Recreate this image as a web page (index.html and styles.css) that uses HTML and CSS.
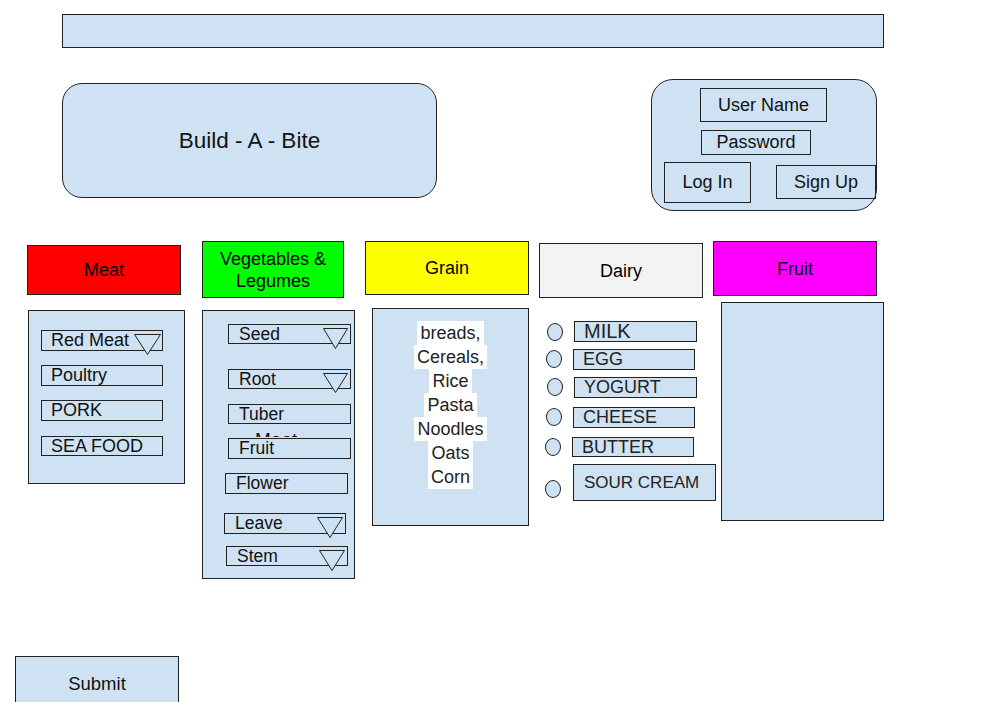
FILE: index.html
```html
<!doctype html>
<html lang="en">
    <head>
        <meta charset="UTF-8" />
        <title>Build - A - Bite</title>
        <link rel="stylesheet" href="styles.css">
    </head>

    <body>
        <div class="topbar"></div>

        <div class="hero">
            <div class="title-box">Build - A - Bite</div>
            <div class="login-box">
                <div class="field field-user">User Name</div>
                <div class="field field-pass">Password</div>
                <div class="login-actions">
                    <div class="btn btn-login">Log In</div>
                    <div class="btn btn-signup">Sign Up</div>
                </div>
            </div>
        </div>

        <div class="groups">
            <!-- meat -->
            <div class="col col-meat">
                <div class="cat cat-meat">Meat</div>
                <div class="panel panel-meat">
                    <div class="item item-redmeat">Red Meat
                        <svg class="tri" width="27" height="21" viewBox="0 0 27 21"><polygon points="0.5,0.5 26.5,0.5 13.5,20.5" /></svg>
                    </div>
                    <div class="item item-poultry">Poultry</div>
                    <div class="item item-pork">PORK</div>
                    <div class="item item-seafood">SEA FOOD</div>
                </div>
            </div>

            <!-- vegetables -->
            <div class="col col-veg">
                <div class="cat cat-veg">Vegetables &amp;<br>Legumes</div>
                <div class="panel panel-veg">
                    <div class="item v-seed">Seed
                        <svg class="tri" width="25" height="21" viewBox="0 0 25 21"><polygon points="0.5,0.5 24.5,0.5 12.5,20.5" /></svg>
                    </div>
                    <div class="item v-root">Root
                        <svg class="tri" width="25" height="20" viewBox="0 0 25 20"><polygon points="0.5,0.5 24.5,0.5 12.5,19.5" /></svg>
                    </div>
                    <div class="item v-tuber">Tuber</div>
                    <div class="ghost"><span>Meat</span></div>
                    <div class="item v-fruit">Fruit</div>
                    <div class="item v-flower">Flower</div>
                    <div class="item v-leave">Leave
                        <svg class="tri" width="26" height="21" viewBox="0 0 26 21"><polygon points="0.5,0.5 25.5,0.5 13,20.5" /></svg>
                    </div>
                    <div class="item v-stem">Stem
                        <svg class="tri" width="26" height="21" viewBox="0 0 26 21"><polygon points="0.5,0.5 25.5,0.5 13,20.5" /></svg>
                    </div>
                </div>
            </div>

            <!-- grain -->
            <div class="col col-grain">
                <div class="cat cat-grain">Grain</div>
                <div class="panel panel-grain">
                    <span>breads,</span>
                    <span>Cereals,</span>
                    <span>Rice</span>
                    <span>Pasta</span>
                    <span>Noodles</span>
                    <span>Oats</span>
                    <span>Corn</span>
                </div>
            </div>

            <!-- dairy -->
            <div class="col col-dairy">
                <div class="cat cat-dairy">Dairy</div>
                <div class="d-row d-milk"><span class="dot"></span><div class="d-box">MILK</div></div>
                <div class="d-row d-egg"><span class="dot"></span><div class="d-box">EGG</div></div>
                <div class="d-row d-yogurt"><span class="dot"></span><div class="d-box">YOGURT</div></div>
                <div class="d-row d-cheese"><span class="dot"></span><div class="d-box">CHEESE</div></div>
                <div class="d-row d-butter"><span class="dot"></span><div class="d-box">BUTTER</div></div>
                <div class="d-row d-sour"><span class="dot"></span><div class="d-box">SOUR CREAM</div></div>
            </div>

            <!-- fruit -->
            <div class="col col-fruit">
                <div class="cat cat-fruit">Fruit</div>
                <div class="panel panel-fruit"></div>
            </div>
        </div>

        <div class="submit">Submit</div>
    </body>
</html>
```

FILE: styles.css
```css
* {
    box-sizing: border-box;
    margin: 0;
    padding: 0;
}

body {
    background: #ffffff;
    color: #111;
    font-family: "Liberation Sans", Arial, sans-serif;
    font-size: 18px;
    overflow: hidden;
    height: 702px;
}

.topbar {
    margin: 14px 0 0 62px;
    width: 822px;
    height: 34px;
    background: #cfe2f3;
    border: 1px solid #222;
}

/* header row */
.hero {
    display: flex;
    align-items: flex-start;
    margin-top: 31px;
}

.title-box {
    margin: 4px 0 0 62px;
    width: 375px;
    height: 115px;
    background: #cfe2f3;
    border: 1px solid #222;
    border-radius: 20px;
    display: flex;
    align-items: center;
    justify-content: center;
    font-size: 22.5px;
}

.login-box {
    margin-left: 214px;
    width: 226px;
    height: 132px;
    background: #cfe2f3;
    border: 1px solid #222;
    border-radius: 22px;
    display: flex;
    flex-direction: column;
    align-items: flex-start;
}

.field,
.btn {
    border: 1px solid #222;
    display: flex;
    align-items: center;
    justify-content: center;
    flex-shrink: 0;
}

.field-user {
    margin: 8px 0 0 48px;
    width: 127px;
    height: 34px;
}

.field-pass {
    margin: 8px 0 0 49px;
    width: 110px;
    height: 25px;
}

.login-actions {
    display: flex;
    align-items: flex-start;
    margin-top: 7px;
}

.btn-login {
    margin-left: 12px;
    width: 87px;
    height: 41px;
}

.btn-signup {
    margin: 3px 0 0 25px;
    width: 100px;
    height: 34px;
}

/* food groups */
.groups {
    display: flex;
    align-items: flex-start;
    margin-top: 30px;
}

.col {
    display: flex;
    flex-direction: column;
    align-items: flex-start;
    flex: none;
    min-width: 0;
}

.cat {
    border: 1px solid #222;
    display: flex;
    align-items: center;
    justify-content: center;
    text-align: center;
    line-height: 22px;
    color: #000;
}

.panel {
    background: #cfe2f3;
    border: 1px solid #222;
    flex-shrink: 0;
}

.item {
    position: relative;
    width: 122px;
    height: 21px;
    border: 1px solid #222;
    padding-left: 9px;
    line-height: 19px;
    flex-shrink: 0;
}

.tri {
    position: absolute;
    top: 3px;
    right: 0;
}

.tri polygon {
    fill: #cfe2f3;
    stroke: #222;
    stroke-width: 1;
}

/* meat */
.col-meat {
    margin-left: 27px;
}

.cat-meat {
    margin-top: 4px;
    width: 154px;
    height: 50px;
    background: #ff0000;
}

.panel-meat {
    margin: 15px 0 0 1px;
    width: 157px;
    height: 174px;
    display: flex;
    flex-direction: column;
    align-items: flex-start;
    padding-left: 12px;
}

.item-redmeat { margin-top: 19px; }
.item-redmeat .tri { right: 1px; }
.item-poultry { margin-top: 14px; }
.item-pork { margin-top: 14px; }
.item-seafood { margin-top: 15px; height: 20px; line-height: 18px; }

/* vegetables */
.col-veg {
    margin-left: 17px;
}

.cat-veg {
    width: 142px;
    height: 57px;
    background: #00ff00;
}

.panel-veg {
    position: relative;
    margin-top: 12px;
    width: 153px;
    height: 269px;
    display: flex;
    flex-direction: column;
    align-items: flex-start;
}

.panel-veg .item {
    width: 123px;
    height: 20px;
    line-height: 18px;
    padding-left: 10px;
    font-size: 17.5px;
}

.panel-veg .tri {
    top: 3px;
    right: 2px;
}

.v-seed { margin: 13px 0 0 25px; }
.v-root { margin: 25px 0 0 25px; }
.v-tuber { margin: 15px 0 0 25px; }
.panel-veg .v-fruit { margin: 14px 0 0 25px; height: 21px; background: #cfe2f3; }
.panel-veg .v-flower { margin: 14px 0 0 22px; height: 21px; }
.panel-veg .v-leave { margin: 19px 0 0 21px; height: 21px; width: 122px; }
.panel-veg .v-stem { margin: 12px 0 0 23px; width: 122px; }

/* leftover label peeking out above the Fruit item */
.ghost {
    position: absolute;
    left: 52px;
    top: 122px;
    height: 4px;
    overflow: hidden;
    font-size: 19px;
    line-height: 18px;
}

.ghost span {
    display: block;
    margin-top: -2px;
}

/* grain */
.col-grain {
    margin-left: 10px;
}

.cat-grain {
    width: 164px;
    height: 54px;
    background: #ffff00;
}

.panel-grain {
    margin: 13px 0 0 7px;
    width: 157px;
    height: 218px;
    padding-top: 12px;
    display: flex;
    flex-direction: column;
    align-items: center;
    color: #222;
}

.panel-grain span {
    background: #ffffff;
    line-height: 24px;
    padding: 0 3px;
}

/* dairy */
.col-dairy {
    margin-left: 10px;
    width: 164px;
}

.cat-dairy {
    margin-top: 2px;
    width: 164px;
    height: 55px;
    background: #f3f3f3;
}

.d-row {
    display: flex;
    align-items: flex-start;
    flex-shrink: 0;
}

.dot {
    width: 16px;
    height: 18px;
    border: 1px solid #222;
    border-radius: 50%;
    background: #cfe2f3;
    flex-shrink: 0;
}

.d-box {
    width: 122px;
    height: 21px;
    border: 1px solid #222;
    background: #cfe2f3;
    padding-left: 9px;
    line-height: 19px;
    flex-shrink: 0;
    color: #222;
}

.d-milk { margin-top: 23px; }
.d-milk .dot { margin: 2px 0 0 8px; }
.d-milk .d-box { margin-left: 11px; width: 123px; font-size: 20px; }

.d-egg { margin-top: 7px; }
.d-egg .dot { margin: 1px 0 0 7px; }
.d-egg .d-box { margin-left: 11px; }

.d-yogurt { margin-top: 7px; }
.d-yogurt .dot { margin: 1px 0 0 8px; }
.d-yogurt .d-box { margin-left: 11px; width: 123px; }

.d-cheese { margin-top: 9px; }
.d-cheese .dot { margin: 1px 0 0 7px; }
.d-cheese .d-box { margin-left: 11px; }

.d-butter { margin-top: 9px; }
.d-butter .dot { margin: 1px 0 0 6px; }
.d-butter .d-box { margin-left: 11px; height: 20px; line-height: 18px; }

.d-sour { margin-top: 7px; }
.d-sour .dot { margin: 16px 0 0 6px; }
.d-sour .d-box {
    margin-left: 12px;
    width: 143px;
    height: 37px;
    line-height: 35px;
    padding-left: 10px;
    font-size: 17px;
}

/* fruit */
.col-fruit {
    margin-left: 10px;
}

.cat-fruit {
    width: 164px;
    height: 55px;
    background: #ff00ff;
}

.panel-fruit {
    margin: 6px 0 0 8px;
    width: 163px;
    height: 219px;
}

/* submit */
.submit {
    margin: 77px 0 0 15px;
    width: 164px;
    height: 55px;
    background: #cfe2f3;
    border: 1px solid #222;
    display: flex;
    align-items: center;
    justify-content: center;
    font-size: 18.5px;
}
```
